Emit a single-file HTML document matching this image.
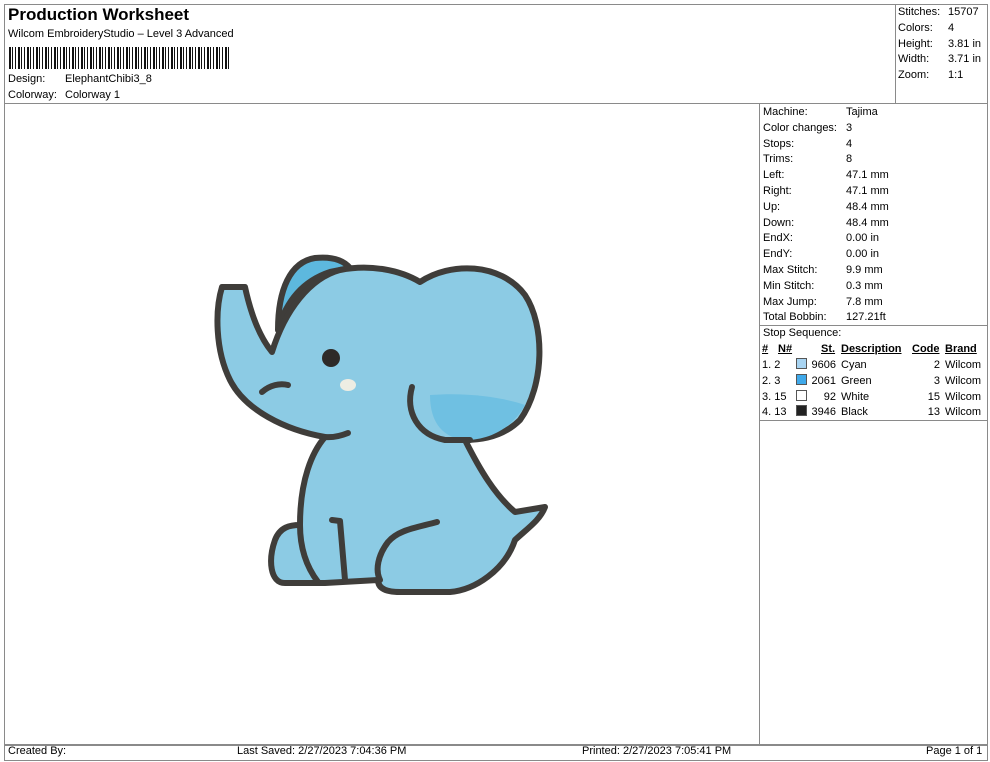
<!DOCTYPE html>
<html><head><style>
body{margin:0;width:990px;height:762px;background:#fff;font-family:"Liberation Sans",Arial,sans-serif;color:#000;position:relative;overflow:hidden}
.a{position:absolute}
.b{position:absolute;border:1px solid #8a8a8a}
.t{font-size:11px;white-space:nowrap;position:absolute}
</style></head><body>
<div class="b" style="left:4px;top:4px;width:982px;height:740px"></div>
<div class="a" style="left:4px;top:103px;width:983px;height:1px;background:#8a8a8a"></div>
<div class="a" style="left:895px;top:4px;width:1px;height:99px;background:#8a8a8a"></div>
<div class="a" style="left:759px;top:103px;width:1px;height:641px;background:#8a8a8a"></div>
<div class="a" style="left:759px;top:325px;width:228px;height:1px;background:#8a8a8a"></div>
<div class="a" style="left:759px;top:420px;width:228px;height:1px;background:#8a8a8a"></div>
<div class="b" style="left:4px;top:744px;width:982px;height:15px"></div>

<div class="a" style="left:8px;top:5px;font-size:17px;font-weight:bold">Production Worksheet</div>
<div class="t" style="left:8px;top:28px">Wilcom EmbroideryStudio – Level 3 Advanced</div>
<div class="a" style="left:9px;top:47px;width:221px;height:22px;background:repeating-linear-gradient(90deg,#111 0 2px,#fff 2px 3px,#111 3px 4px,#fff 4px 6px,#111 6px 7px,#fff 7px 9px)"></div>
<div class="t" style="left:8px;top:73px">Design:</div><div class="t" style="left:65px;top:73px">ElephantChibi3_8</div>
<div class="t" style="left:8px;top:89px">Colorway:</div><div class="t" style="left:65px;top:89px">Colorway 1</div>

<div class="t" style="left:898px;top:5px;line-height:15.8px">Stitches:<br>Colors:<br>Height:<br>Width:<br>Zoom:</div>
<div class="t" style="left:948px;top:5px;line-height:15.8px">15707<br>4<br>3.81 in<br>3.71 in<br>1:1</div>

<div class="t" style="left:763px;top:105px;line-height:15.8px">Machine:<br>Color changes:<br>Stops:<br>Trims:<br>Left:<br>Right:<br>Up:<br>Down:<br>EndX:<br>EndY:<br>Max Stitch:<br>Min Stitch:<br>Max Jump:<br>Total Bobbin:<br>Stop Sequence:</div>
<div class="t" style="left:846px;top:105px;line-height:15.8px">Tajima<br>3<br>4<br>8<br>47.1 mm<br>47.1 mm<br>48.4 mm<br>48.4 mm<br>0.00 in<br>0.00 in<br>9.9 mm<br>0.3 mm<br>7.8 mm<br>127.21ft</div>

<div class="t" style="left:762px;top:343px;font-weight:bold;text-decoration:underline">#</div>
<div class="t" style="left:778px;top:343px;font-weight:bold;text-decoration:underline">N#</div>
<div class="t" style="left:821px;top:343px;font-weight:bold;text-decoration:underline">St.</div>
<div class="t" style="left:841px;top:343px;font-weight:bold;text-decoration:underline">Description</div>
<div class="t" style="left:912px;top:343px;font-weight:bold;text-decoration:underline">Code</div>
<div class="t" style="left:945px;top:343px;font-weight:bold;text-decoration:underline">Brand</div>
<div class="t" style="left:762px;top:358px;line-height:15.8px">1. 2<br>2. 3<br>3. 15<br>4. 13</div>
<div class="a" style="left:796px;top:358px;width:9px;height:9px;border:1px solid #555;background:#a8d4f2"></div>
<div class="a" style="left:796px;top:374px;width:9px;height:9px;border:1px solid #555;background:#3fa9ea"></div>
<div class="a" style="left:796px;top:390px;width:9px;height:9px;border:1px solid #555;background:#fff"></div>
<div class="a" style="left:796px;top:405px;width:9px;height:9px;border:1px solid #555;background:#222"></div>
<div class="t" style="left:808px;top:358px;width:28px;text-align:right;line-height:15.8px">9606<br>2061<br>92<br>3946</div>
<div class="t" style="left:841px;top:358px;line-height:15.8px">Cyan<br>Green<br>White<br>Black</div>
<div class="t" style="left:910px;top:358px;width:30px;text-align:right;line-height:15.8px">2<br>3<br>15<br>13</div>
<div class="t" style="left:945px;top:358px;line-height:15.8px">Wilcom<br>Wilcom<br>Wilcom<br>Wilcom</div>

<div class="t" style="left:8px;top:745px">Created By:</div>
<div class="t" style="left:237px;top:745px">Last Saved: 2/27/2023 7:04:36 PM</div>
<div class="t" style="left:582px;top:745px">Printed: 2/27/2023 7:05:41 PM</div>
<div class="t" style="left:926px;top:745px">Page 1 of 1</div>

<svg class="a" style="left:0;top:0" width="990" height="762" viewBox="0 0 990 762">
<g stroke="#3f3d3a" stroke-width="6" stroke-linecap="round" stroke-linejoin="round">
<path d="M278,330 C278,290 290,262 315,258 C335,256 345,262 350,268 L330,272 C300,282 285,305 278,330Z" fill="#5db8de"/>
<path d="M222,287 L245,287 C250,310 258,335 272,352 C285,310 310,278 340,270 C370,264 400,270 420,282 C450,262 500,262 525,295 C545,325 545,385 520,420 C505,435 485,440 465,440 C480,470 495,495 515,512 L545,507 C540,520 528,528 515,540 C505,570 475,590 450,592 L400,592 C385,592 378,588 378,580 L325,583 L285,583 C270,583 268,560 275,540 C280,527 290,525 300,525 C300,480 312,452 325,437 C285,430 245,410 230,380 C215,350 215,310 222,287 Z" fill="#8ccbe4"/>
<path d="M430,395 C470,392 505,398 525,405 C512,428 490,440 465,440 C445,438 430,425 430,395Z" fill="#6fc0e2" stroke="none"/>
<path d="M412,387 C405,412 418,435 445,440 L470,440" fill="none"/>
<path d="M325,437 C335,438 343,435 348,433" fill="none"/>
<path d="M262,392 C270,385 280,383 288,385" fill="none"/>
<path d="M332,520 L340,521 L345,580" fill="none"/>
<path d="M300,525 C300,545 305,565 318,582" fill="none"/>
<path d="M437,522 C415,528 398,530 388,542 C378,555 375,570 380,580" fill="none"/>
</g>
<circle cx="331" cy="358" r="9" fill="#2e2a28"/>
<ellipse cx="348" cy="385" rx="8" ry="6" fill="#eeede3"/>
</svg>
</body></html>
